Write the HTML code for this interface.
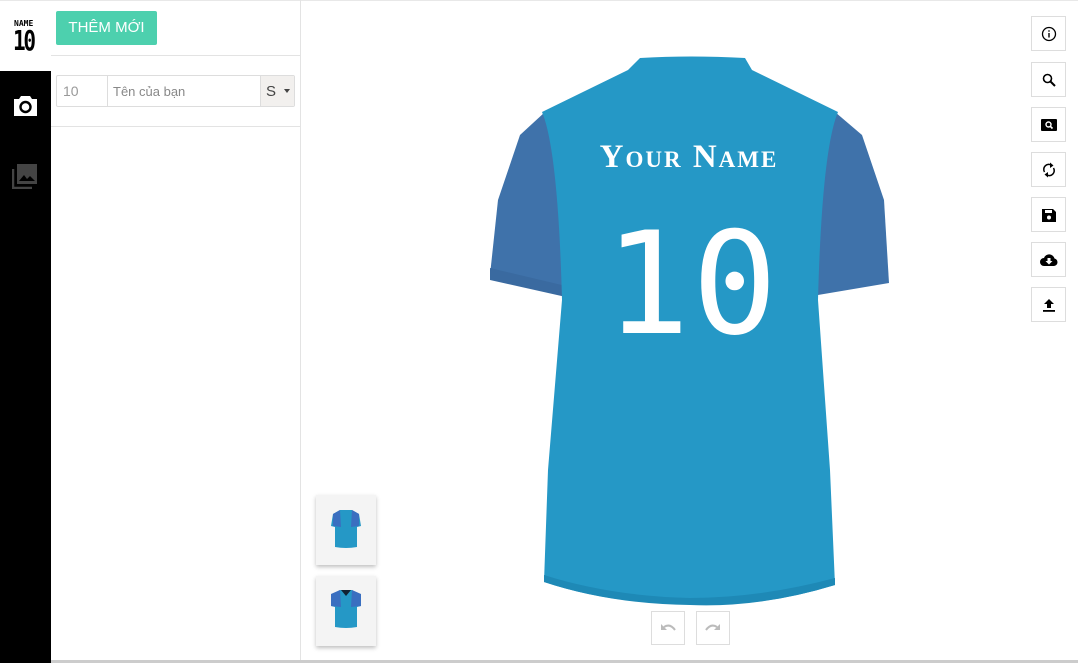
<!DOCTYPE html>
<html><head><meta charset="utf-8"><style>
*{margin:0;padding:0;box-sizing:border-box}
body{width:1078px;height:663px;overflow:hidden;background:#fff;font-family:"Liberation Sans",sans-serif;position:relative}
.abs{position:absolute}
.btn{position:absolute;left:1031px;width:35px;height:35px;border:1px solid #ddd;background:#fff;display:flex;align-items:center;justify-content:center}
.th{position:absolute;left:316px;width:60px;height:70px;background:#f4f4f4;box-shadow:0 2px 4px rgba(0,0,0,.25)}
.ur{position:absolute;top:611px;width:34px;height:34px;border:1px solid #ddd;display:flex;align-items:center;justify-content:center}
</style></head><body>
<div class="abs" style="left:0;top:0;width:1078px;height:1px;background:#e8e8e8"></div>
<div class="abs" style="left:0;top:71px;width:51px;height:592px;background:#000"></div>
<div class="abs" style="left:14px;top:19px;font:bold 8px 'DejaVu Sans Mono',monospace;color:#000">NAME</div>
<div class="abs" style="left:13px;top:24px;font:bold 28px 'DejaVu Sans Mono',monospace;color:#000;letter-spacing:-3px;transform:scaleX(.75);transform-origin:left">10</div>
<svg class="abs" style="left:13px;top:95px" width="25" height="22" viewBox="0 0 25 22"><path d="M8 1h9l2 3h5v17H1V4h5z" fill="#fff"/><circle cx="12.5" cy="12" r="5" fill="none" stroke="#000" stroke-width="2.4"/></svg>
<svg class="abs" style="left:12px;top:163px" width="26" height="26" viewBox="0 0 26 26"><path d="M1 6v19h19" fill="none" stroke="#444" stroke-width="2.5"/><rect x="5" y="1" width="20" height="20" fill="#444"/><path d="M7 18l5-6 3 4 3-3 5 5z" fill="#000"/></svg>
<div class="abs" style="left:56px;top:11px;width:101px;height:34px;background:#4dd0ae;border-radius:2px;color:#fff;font-size:15px;line-height:34px;text-align:center">THÊM MỚI</div>
<div class="abs" style="left:51px;top:55px;width:249px;height:1px;background:#e3e3e3"></div>
<div class="abs" style="left:51px;top:126px;width:249px;height:1px;background:#e3e3e3"></div>
<div class="abs" style="left:300px;top:0;width:1px;height:663px;background:#e3e3e3"></div>
<div class="abs" style="left:56px;top:75px;width:239px;height:32px;border:1px solid #ddd;border-radius:2px;font-size:13px;color:#999">
 <div class="abs" style="left:6px;top:7px;font-size:14px">10</div>
 <div class="abs" style="left:50px;top:0;width:1px;height:30px;background:#ddd"></div>
 <div class="abs" style="left:56px;top:8px;color:#888">Tên của bạn</div>
 <div class="abs" style="left:203px;top:0;width:34px;height:30px;background:#f2f0ee;border-left:1px solid #ddd;color:#444;font-size:15px;padding:7px 0 0 5px">S<span style="position:absolute;left:23px;top:13px;border:3px solid transparent;border-top:4px solid #444"></span></div>
</div>
<svg class="abs" style="left:480px;top:50px" width="420" height="560" viewBox="480 50 420 560">
 <path d="M545 112 L520 135 L498 200 L490 275 L568 296 L575 150 Z" fill="#3f72aa"/>
 <path d="M835 112 L862 135 L884 200 L889 283 L812 296 L805 150 Z" fill="#3f72aa"/>
 <path d="M490 268 L566 286 L566 297 L490 280Z" fill="#3a6aa0"/>
 <path d="M640 58 Q690 55 745 58 L752 70 L838 112 Q822 150 818 300 L830 470 L835 585 Q760 608 690 604 Q610 604 544 582 L548 470 L562 300 Q558 150 542 112 L628 70 Z" fill="#2598c6"/>
 <path d="M544 575 Q610 596 690 598 Q760 598 835 578 L835 585 Q760 608 690 605 Q610 604 544 582Z" fill="#1e89b6"/>
 <text x="689" y="167" text-anchor="middle" fill="#fff" font-family="Liberation Serif,serif" font-size="33" font-weight="bold" letter-spacing="2" style="font-variant:small-caps">Your Name</text>
 <text x="692" y="333" text-anchor="middle" fill="#fff" font-family="DejaVu Sans Mono,monospace" font-size="142" letter-spacing="2">10</text>
</svg>
<div class="btn" style="top:16px"><svg width="16" height="16" viewBox="0 0 16 16"><circle cx="8" cy="8" r="6.5" fill="none" stroke="#000" stroke-width="1.3"/><rect x="7.3" y="7" width="1.4" height="4.5"/><rect x="7.3" y="4.3" width="1.4" height="1.4"/></svg></div>
<div class="btn" style="top:62px"><svg width="14" height="14" viewBox="0 0 14 14"><circle cx="5.5" cy="5.5" r="4" fill="none" stroke="#000" stroke-width="1.6"/><path d="M8.5 8.5L13 13" stroke="#000" stroke-width="2"/></svg></div>
<div class="btn" style="top:107px"><svg width="16" height="14" viewBox="0 0 16 14"><rect x="0" y="1" width="16" height="12" rx="1"/><circle cx="7.5" cy="6.5" r="2.5" fill="none" stroke="#fff" stroke-width="1.4"/><path d="M9.3 8.3L11.5 10.5" stroke="#fff" stroke-width="1.6"/></svg></div>
<div class="btn" style="top:152px"><svg width="14" height="16" viewBox="0 0 14 16"><path d="M2.5 10A5 5 0 0 1 9.5 3.2" fill="none" stroke="#000" stroke-width="1.5"/><path d="M8 0.5L11.5 3.5L8 6z"/><path d="M11.5 6A5 5 0 0 1 4.5 12.8" fill="none" stroke="#000" stroke-width="1.5"/><path d="M6 15.5L2.5 12.5L6 10z"/></svg></div>
<div class="btn" style="top:197px"><svg width="14" height="14" viewBox="0 0 14 14"><path d="M0 1h11l3 3v10H0z"/><rect x="3" y="2" width="7" height="3" fill="#fff"/><circle cx="7" cy="9.5" r="2" fill="#fff"/></svg></div>
<div class="btn" style="top:242px"><svg width="18" height="14" viewBox="0 0 18 14"><path d="M4 13A4 4 0 0 1 4 5A5.5 5.5 0 0 1 14.5 5.5A3.8 3.8 0 0 1 14 13z"/><path d="M7.5 5h3v3h2l-3.5 3.5L5.5 8h2z" fill="#fff"/></svg></div>
<div class="btn" style="top:287px"><svg width="12" height="14" viewBox="0 0 12 14"><path d="M6 1L11 6H8v4H4V6H1z"/><rect x="0" y="12" width="12" height="1.8"/></svg></div>
<div class="th" style="top:495px"><svg width="60" height="70" viewBox="0 0 60 70"><path d="M24 15h12l7 4 2 12-4 1 0 20q-11 2-22 0l0-20-4-1 2-12z" fill="#2598c6"/><path d="M17 19l7-4 1 17-8-1z M43 19l-7-4-1 17 8-1z" fill="#3a6fc0"/></svg></div>
<div class="th" style="top:576px"><svg width="60" height="70" viewBox="0 0 60 70"><path d="M24 14h12l7 4 2 12-4 1 0 20q-11 2-22 0l0-20-4-1 2-12z" fill="#2598c6"/><path d="M15 18l9-4 1 17-10-1z M45 18l-9-4-1 17 10-1z" fill="#3a6fc0"/><path d="M25 14h10l-5 6z" fill="#123"/></svg></div>
<div class="ur" style="left:651px"><svg width="16" height="10" viewBox="0 0 16 10"><path d="M4 4Q10 0 15 7" fill="none" stroke="#bbb" stroke-width="2"/><path d="M1 1v6h6z" fill="#bbb"/></svg></div>
<div class="ur" style="left:696px"><svg width="16" height="10" viewBox="0 0 16 10"><path d="M12 4Q6 0 1 7" fill="none" stroke="#bbb" stroke-width="2"/><path d="M15 1v6H9z" fill="#bbb"/></svg></div>
<div class="abs" style="left:51px;top:660px;width:1027px;height:3px;background:#ccc"></div>
</body></html>
